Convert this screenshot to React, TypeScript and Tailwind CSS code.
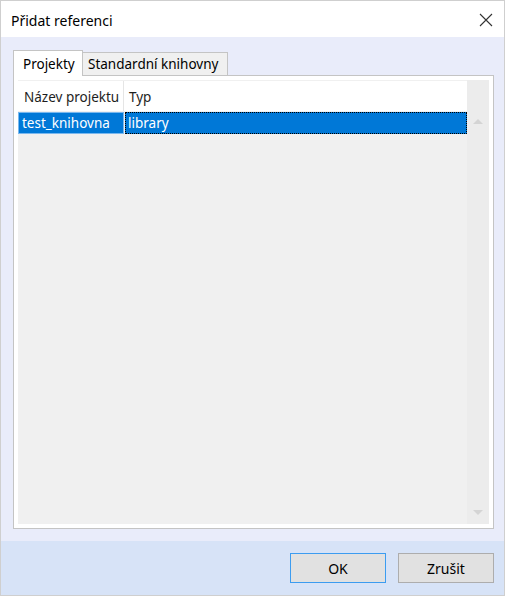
import React from "react";

export default function App() {
  const font = { fontFamily: '"Noto Sans", "Open Sans", sans-serif' };
  return (
    <div
      className="w-[505px] h-[596px] flex flex-col border border-[#cfcfcf] bg-white text-[13.5px] text-black"
      style={font}
    >
      {/* Title bar */}
      <div className="h-[36px] bg-white flex items-center justify-between pl-[10px] pr-[11px] shrink-0">
        <span className="text-[14px] leading-none pt-[4px]">Přidat referenci</span>
        <svg width="14" height="14" viewBox="0 0 14 14" className="mt-[2px]">
          <path d="M1 1 L13 13 M13 1 L1 13" stroke="#333" strokeWidth="1.1" fill="none" />
        </svg>
      </div>

      {/* Body */}
      <div className="flex-1 bg-[#e9ecfa] pl-[12px] pr-[10px] pt-[13px] pb-[12px] flex flex-col">
        {/* Tabs */}
        <div className="flex items-end h-[26px] relative z-10 -mb-px">
          <div className="h-[26px] w-[70px] bg-white border border-b-0 border-[#c4c4c4] flex items-center pl-[9px] pt-[1px]">
            Projekty
          </div>
          <div className="h-[24px] w-[145px] bg-[#f0f0f0] border border-l-0 border-[#c4c4c4] flex items-center pl-[5px]">
            Standardní knihovny
          </div>
        </div>
        {/* Panel */}
        <div className="flex-1 bg-white border border-[#c4c4c4] p-[4px] flex">
          <div className="flex-1 bg-[#f0f0f0] flex">
            <div className="flex-1 flex flex-col">
              {/* header */}
              <div className="h-[30px] bg-white flex mt-[1px]">
                <div className="w-[106px] border-r border-[#e5e5e5] flex items-center pl-[6px] pt-[2px] text-[#1e1e1e]">
                  Název projektu
                </div>
                <div className="flex-1 flex items-center pl-[5px] pt-[2px] text-[#1e1e1e]">Typ</div>
              </div>
              {/* row */}
              <div className="h-[22px] flex mt-px">
                <div className="w-[106px] bg-[#0078d7] border border-[#7ab8ee] text-white flex items-center pl-[3px] pt-[1px]">
                  test_knihovna
                </div>
                <div className="flex-1 ml-[1px] bg-[#0078d7] border border-dotted border-black text-white flex items-center pl-[2px] pt-[1px]">
                  library
                </div>
              </div>
            </div>
            {/* scrollbar */}
            <div className="w-[22px] bg-[#ececec] flex flex-col items-center justify-between pt-[39px] pb-[9px]">
              <svg width="10" height="5" viewBox="0 0 10 5">
                <path d="M0 5 L5 0 L10 5 Z" fill="#d4d4d4" />
              </svg>
              <svg width="10" height="5" viewBox="0 0 10 5">
                <path d="M0 0 L10 0 L5 5 Z" fill="#d4d4d4" />
              </svg>
            </div>
          </div>
        </div>
      </div>

      {/* Footer */}
      <div className="h-[54px] bg-[#d7e3f7] flex justify-end items-start pt-[12px] pr-[10px] gap-[12px] shrink-0">
        <button className="w-[96px] h-[30px] bg-[#e1e1e1] border border-[#3c9cf0] text-[14px] flex items-center justify-center">
          OK
        </button>
        <button className="w-[96px] h-[30px] bg-[#e1e1e1] border border-[#adadad] text-[14px] flex items-center justify-center">
          Zrušit
        </button>
      </div>
    </div>
  );
}
